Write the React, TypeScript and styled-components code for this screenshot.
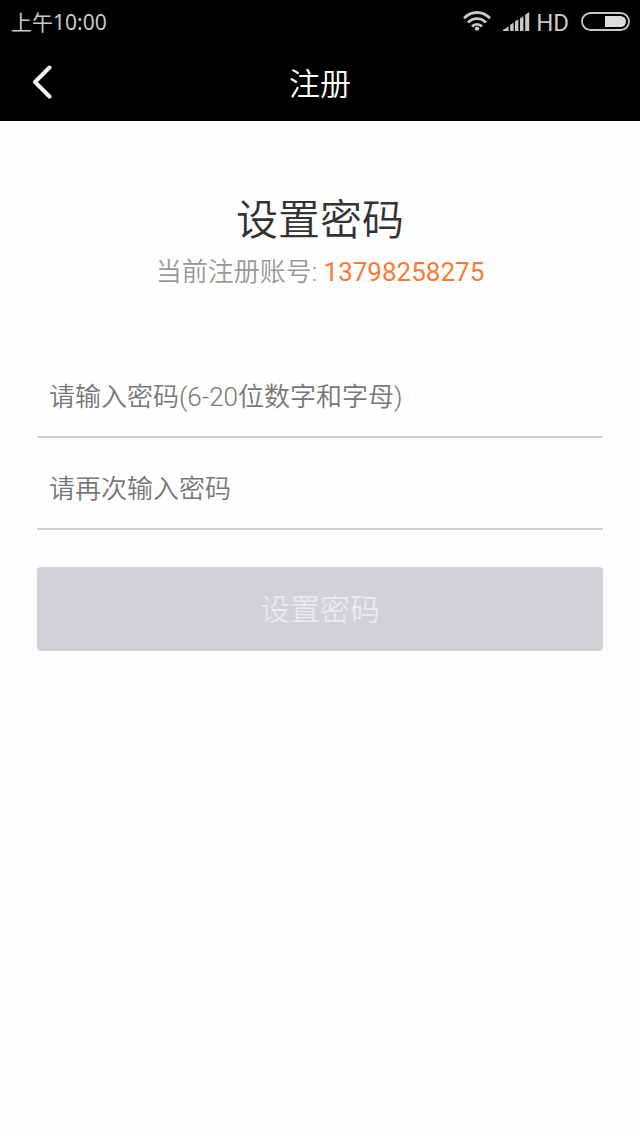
import React from 'react';
import styled, { createGlobalStyle } from 'styled-components';

const GlobalStyle = createGlobalStyle`
  * { box-sizing: border-box; }
  body {
    margin: 0;
    background: #fefefe;
    font-family: Roboto, "Noto Sans CJK SC", sans-serif;
    font-weight: 350;
  }
`;

const Top = styled.header`
  background: #000;
  color: #fff;
`;

const StatusBar = styled.div`
  display: flex;
  align-items: center;
  justify-content: space-between;
  height: 42px;
  padding: 0 10px 0 11px;
  color: #c8c8c8;
  font-weight: 400;
`;

const Clock = styled.time`
  font-family: "Noto Sans", "Noto Sans CJK SC", sans-serif;
  font-size: 21px;
`;

const Indicators = styled.div`
  display: flex;
  align-items: center;
  gap: 12px;

  svg { display: block; }
`;

const Cellular = styled.span`
  display: flex;
  align-items: center;
  gap: 6px;
`;

const Network = styled.span`
  padding-top: 4px;
  font-size: 24px;
  line-height: 28px;
`;

const NavBar = styled.nav`
  display: grid;
  grid-template-columns: 84px 1fr 84px;
  align-items: center;
  height: 79px;
`;

const BackButton = styled.button`
  display: flex;
  align-items: center;
  justify-content: center;
  height: 79px;
  padding: 0;
  border: 0;
  background: none;
  color: #f2f2f6;
`;

const PageTitle = styled.h1`
  margin: 0;
  padding-top: 6px;
  font-size: 31px;
  font-weight: 350;
  line-height: 44px;
  text-align: center;
`;

const Content = styled.main`
  padding: 70px 37px 40px;
`;

const Heading = styled.h2`
  margin: 0;
  color: #333;
  font-size: 42px;
  font-weight: 350;
  line-height: 60px;
  text-align: center;
`;

const Account = styled.p`
  margin: 2px 0 55px;
  color: #999;
  font-size: 26px;
  line-height: 38px;
  text-align: center;
`;

const Phone = styled.span`
  color: #f77b35;
  font-weight: 400;
`;

const Field = styled.input`
  display: block;
  width: 100%;
  height: 92px;
  padding: 12px 12px 0;
  border: 0;
  border-bottom: 2px solid #cfcfcf;
  border-radius: 0;
  outline: 0;
  background: none;
  color: #333;
  font: inherit;
  font-size: 26px;

  &::placeholder {
    color: #777;
    opacity: 1;
  }
`;

const SubmitButton = styled.button`
  display: block;
  width: 100%;
  height: 84px;
  margin-top: 37px;
  padding: 0 0 4px;
  border: 0;
  border-radius: 4px;
  background: #d1d2d7;
  color: #e9e9ee;
  font: inherit;
  font-size: 30px;
`;

const WifiIcon = () => (
  <svg width="28" height="20" viewBox="0 0 28 20" fill="none" stroke="currentColor" strokeWidth="2.8" aria-hidden="true">
    <path d="M1 7.2C8.5-.4 19.5-.4 27 7.2" />
    <path d="M5 11.5c5.2-5.2 12.8-5.2 18 0" />
    <path d="M9 15.5c2.9-2.9 7.1-2.9 10 0" />
    <circle cx="14" cy="17.6" r="2.2" fill="currentColor" stroke="none" />
  </svg>
);

const SignalIcon = () => (
  <svg width="27" height="19" viewBox="0 0 27 19" fill="currentColor" aria-hidden="true">
    <path d="M0 19v-1l5.500-3.500V19zM7.200 19v-6l3.400-2.400V19zM12 19V9.600l3.400-2.400V19zM17 19V6.400l3.400-2.400V19zM22.200 19V2.700L26.200 0v19z" />
  </svg>
);

const BatteryIcon = () => (
  <svg width="49" height="19" viewBox="0 0 49 19" aria-hidden="true">
    <rect x="1" y="1" width="47" height="17" rx="8.5" fill="none" stroke="currentColor" strokeWidth="1.8" />
    <path d="M24 4h15.5a5.5 5.5 0 0 1 0 11H24z" fill="#dcdcdc" />
  </svg>
);

const BackIcon = () => (
  <svg width="20" height="34" viewBox="0 0 20 34" fill="none" stroke="currentColor" strokeWidth="4" strokeLinecap="round" strokeLinejoin="round" aria-hidden="true">
    <path d="M17.5 2.5L3 17l14.5 14.5" />
  </svg>
);

export default function App() {
  return (
    <>
      <GlobalStyle />
      <Top>
        <StatusBar>
          <Clock>上午10:00</Clock>
          <Indicators>
            <WifiIcon />
            <Cellular>
              <SignalIcon />
              <Network>HD</Network>
            </Cellular>
            <BatteryIcon />
          </Indicators>
        </StatusBar>
        <NavBar>
          <BackButton type="button" aria-label="返回">
            <BackIcon />
          </BackButton>
          <PageTitle>注册</PageTitle>
        </NavBar>
      </Top>
      <Content>
        <Heading>设置密码</Heading>
        <Account>
          当前注册账号: <Phone>13798258275</Phone>
        </Account>
        <form>
          <Field type="password" aria-label="密码" placeholder="请输入密码(6-20位数字和字母)" />
          <Field type="password" aria-label="确认密码" placeholder="请再次输入密码" />
          <SubmitButton type="submit" disabled>
            设置密码
          </SubmitButton>
        </form>
      </Content>
    </>
  );
}
